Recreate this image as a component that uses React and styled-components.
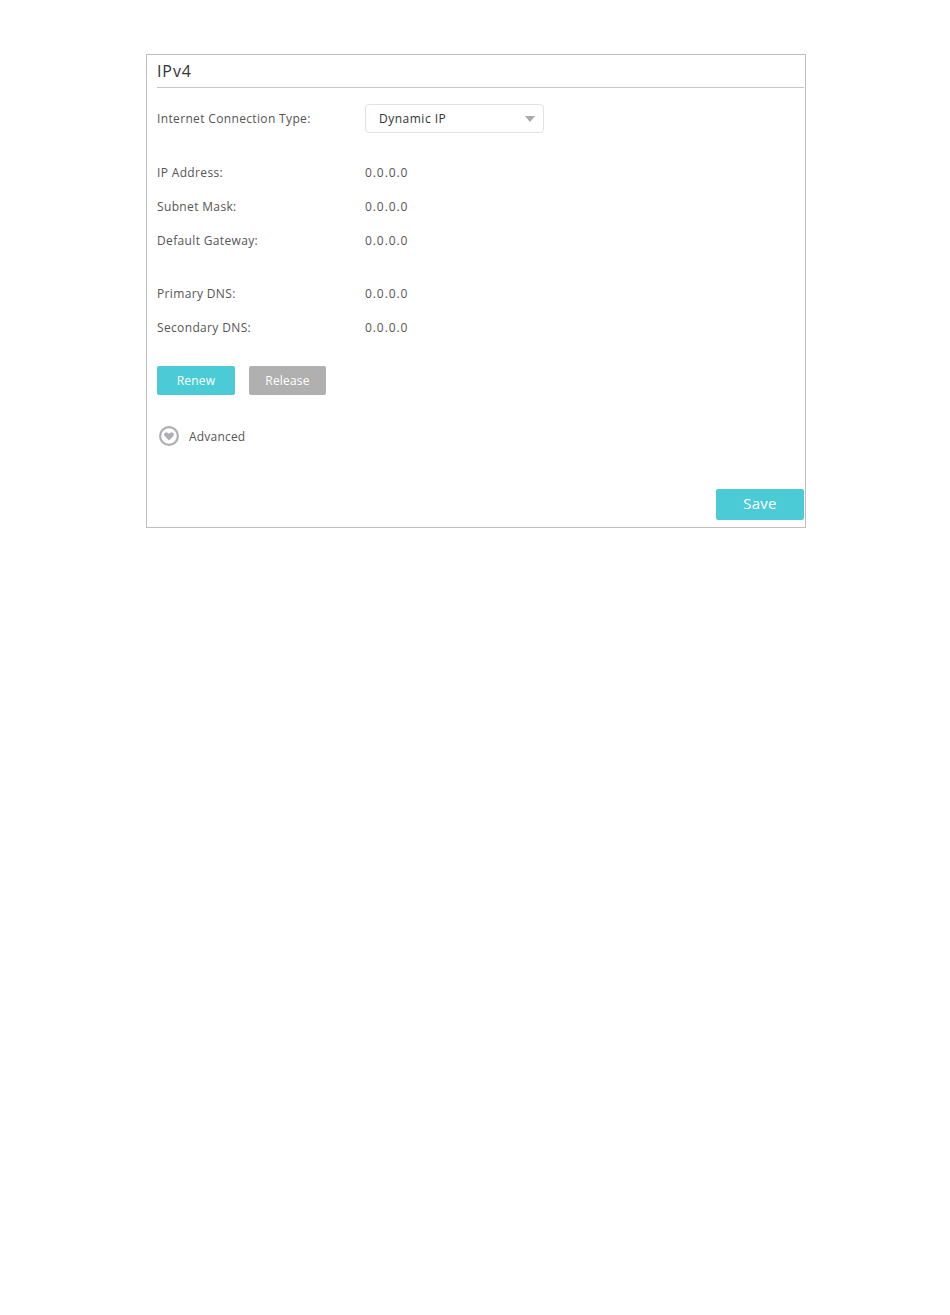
import React from 'react';
import styled, { createGlobalStyle } from 'styled-components';

const GlobalStyle = createGlobalStyle`
  html, body {
    margin: 0;
    padding: 0;
    background: #fff;
    font-family: "Open Sans", "Liberation Sans", sans-serif;
  }
`;

const Page = styled.div`
  width: 950px;
  height: 1315px;
  padding: 54px 0 0 146px;
  box-sizing: border-box;
`;

const Panel = styled.section`
  width: 660px;
  height: 474px;
  box-sizing: border-box;
  border: 1px solid #c0c0c0;
  padding: 0 1px 0 10px;
  display: flex;
  flex-direction: column;
`;

const Title = styled.h2`
  margin: 0;
  height: 33px;
  line-height: 32px;
  box-sizing: border-box;
  border-bottom: 1px solid #c6c6c6;
  font-size: 16px;
  font-weight: 400;
  letter-spacing: 0.9px;
  color: #333;
`;

const Row = styled.div`
  display: flex;
  align-items: center;
  height: ${p => p.$height || 34}px;
  margin-top: ${p => p.$top || 0}px;
`;

const Label = styled.div`
  width: 208px;
  font-size: 12px;
  letter-spacing: 0.35px;
  color: #555;
`;

const Value = styled.div`
  font-size: 12px;
  letter-spacing: 0.93px;
  color: #555;
`;

const Select = styled.div`
  width: 179px;
  height: 29px;
  box-sizing: border-box;
  border: 1px solid #e2e2e2;
  border-radius: 4px;
  padding: 0 8px 0 13px;
  display: flex;
  align-items: center;
  justify-content: space-between;
  font-size: 12px;
  letter-spacing: 0.5px;
  color: #333;
`;

const Caret = styled.span`
  width: 0;
  height: 0;
  border-left: 5px solid transparent;
  border-right: 5px solid transparent;
  border-top: 6px solid #aaa;
`;

const Buttons = styled.div`
  display: flex;
  gap: 14px;
  margin-top: 22px;
`;

const Button = styled.button`
  width: ${p => p.$width}px;
  height: 29px;
  padding: 0;
  border: 0;
  border-radius: 2px;
  background: ${p => p.$bg};
  color: #fff;
  font-family: inherit;
  font-size: 12px;
  letter-spacing: 0.2px;
`;

const Advanced = styled.div`
  display: flex;
  align-items: center;
  gap: 10px;
  margin: 26px 0 0 2px;
  height: 30px;
  font-size: 12px;
  letter-spacing: 0.2px;
  color: #555;
`;

const IconWrap = styled.svg`
  margin-top: -1px;
`;

const Footer = styled.div`
  margin-top: auto;
  padding-bottom: 7px;
  display: flex;
  justify-content: flex-end;
`;

const SaveButton = styled(Button)`
  width: 88px;
  height: 31px;
  padding-bottom: 3px;
  font-size: 15px;
  font-weight: 500;
  letter-spacing: 0.3px;
`;

const AdvancedIcon = () => (
  <IconWrap width="20" height="20" viewBox="0 0 20 20">
    <circle cx="10" cy="10" r="8.9" fill="none" stroke="#aeaeb4" strokeWidth="2.2" />
    <path d="M10 14.4 L5.6 10 C4.4 8.4 5.5 6.6 7.3 6.6 C8.5 6.6 9.5 7.2 10 8 C10.5 7.2 11.5 6.6 12.7 6.6 C14.5 6.6 15.6 8.4 14.4 10 Z" fill="#aeaeb4" />
  </IconWrap>
);

const info = [
  ['IP Address:', '0.0.0.0'],
  ['Subnet Mask:', '0.0.0.0'],
  ['Default Gateway:', '0.0.0.0'],
];

const dns = [
  ['Primary DNS:', '0.0.0.0'],
  ['Secondary DNS:', '0.0.0.0'],
];

export default function App() {
  return (
    <Page>
      <GlobalStyle />
      <Panel>
        <Title>IPv4</Title>
        <Row $height={29} $top={16}>
          <Label>Internet Connection Type:</Label>
          <Select>
            Dynamic IP
            <Caret />
          </Select>
        </Row>
        <Row $top={22}><Label>{info[0][0]}</Label><Value>{info[0][1]}</Value></Row>
        {info.slice(1).map(([k, v]) => (
          <Row key={k}><Label>{k}</Label><Value>{v}</Value></Row>
        ))}
        <Row $top={19}><Label>{dns[0][0]}</Label><Value>{dns[0][1]}</Value></Row>
        <Row><Label>{dns[1][0]}</Label><Value>{dns[1][1]}</Value></Row>
        <Buttons>
          <Button $width={78} $bg="#4acbd6">Renew</Button>
          <Button $width={77} $bg="#b0b0b0">Release</Button>
        </Buttons>
        <Advanced>
          <AdvancedIcon />
          Advanced
        </Advanced>
        <Footer>
          <SaveButton $bg="#4acbd6">Save</SaveButton>
        </Footer>
      </Panel>
    </Page>
  );
}
